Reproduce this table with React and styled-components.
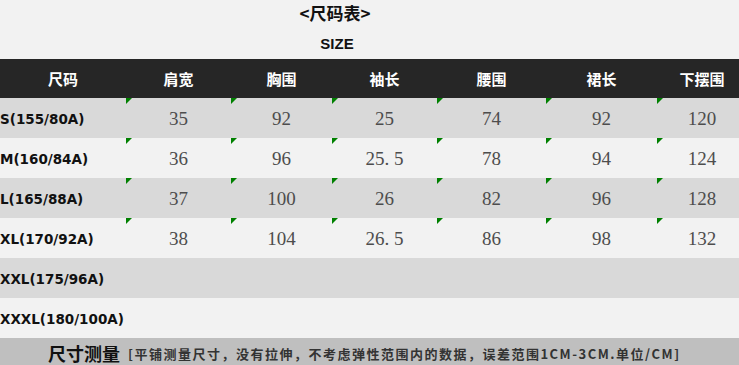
import React from "react";
import styled, { createGlobalStyle } from "styled-components";

const GlobalStyle = createGlobalStyle`
  html, body {
    margin: 0;
    padding: 0;
    background: #f2f2f2;
    overflow: hidden;
  }
`;

const Page = styled.div`
  width: 739px;
  height: 365px;
  overflow: hidden;
  background: #f2f2f2;
`;

const Heading = styled.div`
  width: 670px;
  height: 59px;
  display: flex;
  flex-direction: column;
  align-items: center;
  color: #111;
  .title {
    margin-top: 2px;
    font-family: "Noto Sans CJK SC", sans-serif;
    font-weight: 700;
    font-size: 17px;
    line-height: 22px;
  }
  .size {
    margin-top: 10px;
    padding-left: 4px;
    font-family: "Liberation Sans", Arial, sans-serif;
    font-weight: 700;
    font-size: 15px;
    line-height: 20px;
  }
`;

const Grid = styled.div`
  display: grid;
  grid-template-columns: 126px 105px 101px 105px 109px 111px 90px;
  width: 747px;
`;

const HeadCell = styled.div`
  height: 39px;
  background: #262626;
  color: #fff;
  display: flex;
  align-items: center;
  justify-content: center;
  font-family: "Noto Sans CJK SC", sans-serif;
  font-weight: 700;
  font-size: 15px;
`;

const Cell = styled.div`
  position: relative;
  height: 40px;
  padding-top: 1px;
  box-sizing: border-box;
  background: ${(p) => (p.$dark ? "#d9d9d9" : "#f2f2f2")};
  display: flex;
  align-items: center;
  justify-content: center;
  color: #4d4d4d;
  font-family: "Liberation Serif", "Times New Roman", serif;
  font-size: 19px;
  &::before {
    content: "";
    display: ${(p) => (p.$mark ? "block" : "none")};
    position: absolute;
    left: 0;
    top: 0;
    width: 0;
    height: 0;
    border-top: 6px solid #008000;
    border-right: 6px solid transparent;
  }
`;

const Dot = styled.span`
  display: inline-block;
  width: 9.5px;
`;

const SizeCell = styled(Cell)`
  justify-content: flex-start;
  color: #111;
  font-family: "DejaVu Sans", Verdana, sans-serif;
  font-weight: 700;
  font-size: 13.5px;
`;

const Footer = styled.div`
  height: 30px;
  background: #bfbfbf;
  display: flex;
  align-items: center;
  padding-left: 48px;
  gap: 8px;
  .label {
    font-family: "Noto Sans CJK SC", sans-serif;
    font-weight: 700;
    font-size: 18px;
    color: #111;
  }
  .note {
    font-family: "Noto Sans CJK SC", sans-serif;
    font-weight: 700;
    font-size: 13px;
    letter-spacing: 1.5px;
    color: #333;
  }
`;

const headers = ["尺码", "肩宽", "胸围", "袖长", "腰围", "裙长", "下摆围"];

const rows = [
  ["S(155/80A)", "35", "92", "25", "74", "92", "120"],
  ["M(160/84A)", "36", "96", "25.5", "78", "94", "124"],
  ["L(165/88A)", "37", "100", "26", "82", "96", "128"],
  ["XL(170/92A)", "38", "104", "26.5", "86", "98", "132"],
  ["XXL(175/96A)", "", "", "", "", "", ""],
  ["XXXL(180/100A)", "", "", "", "", "", ""],
];

// half-width period like the original spreadsheet font
const renderValue = (v) => {
  if (!v.includes(".")) return v;
  const [a, b] = v.split(".");
  return (
    <>
      {a}
      <Dot>.</Dot>
      {b}
    </>
  );
};

export default function App() {
  return (
    <Page>
      <GlobalStyle />
      <Heading>
        <div className="title">&lt;尺码表&gt;</div>
        <div className="size">SIZE</div>
      </Heading>
      <Grid>
        {headers.map((h) => (
          <HeadCell key={h}>{h}</HeadCell>
        ))}
        {rows.map((row, r) =>
          row.map((v, c) =>
            c === 0 ? (
              <SizeCell key={`${r}-${c}`} $dark={r % 2 === 0}>
                {v}
              </SizeCell>
            ) : (
              <Cell key={`${r}-${c}`} $dark={r % 2 === 0} $mark={v !== ""}>
                {renderValue(v)}
              </Cell>
            )
          )
        )}
      </Grid>
      <Footer>
        <span className="label">尺寸测量</span>
        <span className="note">
          [平铺测量尺寸，没有拉伸，不考虑弹性范围内的数据，误差范围1CM-3CM.单位/CM]
        </span>
      </Footer>
    </Page>
  );
}
